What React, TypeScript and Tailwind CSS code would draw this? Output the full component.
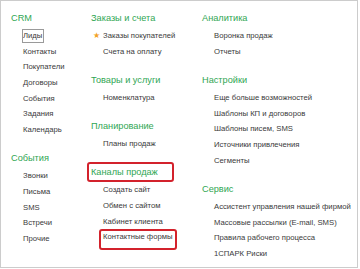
import React from 'react';

type Item = { label: string; star?: boolean; focus?: boolean; mark?: boolean };
type Section = { title: string; items: Item[]; mark?: boolean };

const columns: Section[][] = [
  [
    {
      title: 'CRM',
      items: [
        { label: 'Лиды', focus: true },
        { label: 'Контакты' },
        { label: 'Покупатели' },
        { label: 'Договоры' },
        { label: 'События' },
        { label: 'Задания' },
        { label: 'Календарь' },
      ],
    },
    {
      title: 'События',
      items: [{ label: 'Звонки' }, { label: 'Письма' }, { label: 'SMS' }, { label: 'Встречи' }, { label: 'Прочие' }],
    },
  ],
  [
    {
      title: 'Заказы и счета',
      items: [{ label: 'Заказы покупателей', star: true }, { label: 'Счета на оплату' }],
    },
    { title: 'Товары и услуги', items: [{ label: 'Номенклатура' }] },
    { title: 'Планирование', items: [{ label: 'Планы продаж' }] },
    {
      title: 'Каналы продаж',
      mark: true,
      items: [
        { label: 'Создать сайт' },
        { label: 'Обмен с сайтом' },
        { label: 'Кабинет клиента' },
        { label: 'Контактные формы', mark: true },
      ],
    },
  ],
  [
    { title: 'Аналитика', items: [{ label: 'Воронка продаж' }, { label: 'Отчеты' }] },
    {
      title: 'Настройки',
      items: [
        { label: 'Еще больше возможностей' },
        { label: 'Шаблоны КП и договоров' },
        { label: 'Шаблоны писем, SMS' },
        { label: 'Источники привлечения' },
        { label: 'Сегменты' },
      ],
    },
    {
      title: 'Сервис',
      items: [
        { label: 'Ассистент управления нашей фирмой' },
        { label: 'Массовые рассылки (E-mail, SMS)' },
        { label: 'Правила рабочего процесса' },
        { label: '1СПАРК Риски' },
      ],
    },
  ],
];

function Row({ item }: { item: Item }) {
  return (
    <div className="pl-3 h-[15.7px] leading-[15.7px] text-[7.7px] text-[#3a3a3a] whitespace-nowrap">
      <span className="relative inline-block">
        {item.star && (
          <span className="absolute -left-[10px] top-0 text-[8px] text-[#f2a327]">★</span>
        )}
        {item.label}
        {item.focus && (
          <span className="absolute -left-[1px] -right-[2px] top-[1px] bottom-[0.7px] border border-[#9a9a9a]" />
        )}
        {item.mark && (
          <span className="absolute -left-[4px] -right-[4px] -top-[0.5px] -bottom-[4.5px] border-2 border-[#d3222c] rounded-[3px]" />
        )}
      </span>
    </div>
  );
}

export default function App() {
  return (
    <div
      className="w-[358px] h-[268px] border border-[#cccccc] bg-white pl-[10px] pt-[7px] grid grid-cols-[80px_111px_1fr]"
      style={{ fontFamily: '"Liberation Sans", Arial, sans-serif' }}
    >
      {columns.map((col, ci) => (
        <div key={ci}>
          {col.map((sec, si) => (
            <div key={si} className={si > 0 ? 'mt-[10.5px]' : ''}>
              <div className="h-[20px] leading-[20px] text-[9.2px] text-[#2fa653] whitespace-nowrap">
                {sec.mark ? (
                  <span className="inline-block -ml-[4px] w-[87px] pl-[2px] h-[20px] leading-[16px] border-2 border-[#d3222c] rounded-[3px]">
                    {sec.title}
                  </span>
                ) : (
                  sec.title
                )}
              </div>
              {sec.items.map((it, ii) => (
                <Row key={ii} item={it} />
              ))}
            </div>
          ))}
        </div>
      ))}
    </div>
  );
}
